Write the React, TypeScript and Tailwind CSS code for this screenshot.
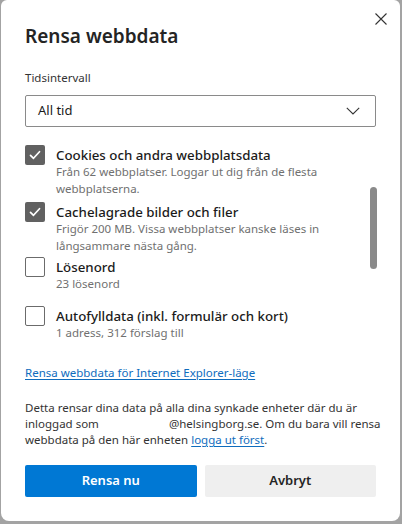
import React from "react";

const font = { fontFamily: '"Noto Sans", "Open Sans", sans-serif' };

const Check: React.FC<{ checked: boolean }> = ({ checked }) =>
  checked ? (
    <span className="flex h-[20px] w-[20px] shrink-0 items-center justify-center rounded-[2px] bg-[#616161]">
      <svg width="14" height="14" viewBox="0 0 14 14" fill="none">
        <path d="M2.5 7.3l3 3 6-6.6" stroke="#fff" strokeWidth="1.7" strokeLinecap="round" strokeLinejoin="round" />
      </svg>
    </span>
  ) : (
    <span className="h-[20px] w-[20px] shrink-0 rounded-[2px] border border-[#6b6b6b] bg-white" />
  );

interface Item {
  label: string;
  desc: React.ReactNode;
  checked: boolean;
  gap: string;
}

const items: Item[] = [
  {
    label: "Cookies och andra webbplatsdata",
    desc: (
      <>
        Från 62 webbplatser. Loggar ut dig från de flesta
        <br />
        webbplatserna.
      </>
    ),
    checked: true,
    gap: "mt-0",
  },
  {
    label: "Cachelagrade bilder och filer",
    desc: (
      <>
        Frigör 200 MB. Vissa webbplatser kanske läses in
        <br />
        långsammare nästa gång.
      </>
    ),
    checked: true,
    gap: "mt-[5px]",
  },
  { label: "Lösenord", desc: "23 lösenord", checked: false, gap: "mt-[3px]" },
  {
    label: "Autofylldata (inkl. formulär och kort)",
    desc: "1 adress, 312 förslag till",
    checked: false,
    gap: "mt-[14px]",
  },
];

export default function App() {
  return (
    <div className="h-[524px] w-[402px] bg-[#a3a3a3]" style={font}>
      <div className="relative ml-[1px] h-[521px] w-[399px] rounded-b-lg rounded-t-md bg-white px-[24px] pt-[24px] text-[#1b1b1b]">
        <button className="absolute right-[13px] top-[13px] flex h-[12px] w-[12px] items-center justify-center">
          <svg width="12" height="12" viewBox="0 0 12 12">
            <path d="M0.5 0.5l11 11M11.5 0.5l-11 11" stroke="#333" strokeWidth="1.1" />
          </svg>
        </button>

        {/* scrollbar of the list */}
        <div className="absolute right-[23px] top-[187px] h-[82px] w-[7px] rounded-full bg-[#8a8a8a]" />

        <h1 className="text-[19px] font-semibold leading-[24px] text-[#242424]">Rensa webbdata</h1>

        <div className="mt-[22px] text-[11.5px] leading-[16px] text-[#333]">Tidsintervall</div>

        <div className="mt-[9px] flex h-[32px] items-center justify-between rounded-[2px] border border-[#8a8a8a] pl-[12px] pr-[15px]">
          <span className="text-[13px] text-[#1b1b1b]">All tid</span>
          <svg width="14" height="8" viewBox="0 0 14 8" fill="none">
            <path d="M0.8 0.8l6.2 6.2 6.2-6.2" stroke="#333" strokeWidth="1.1" />
          </svg>
        </div>

        <div className="mt-[18px]">
          {items.map((it, i) => (
            <div key={i} className={`flex gap-[11px] ${it.gap}`}>
              <Check checked={it.checked} />
              <div>
                <div className="text-[13.3px] font-medium leading-[20px]">{it.label}</div>
                <div className="mt-[-2px] text-[11.5px] leading-[17px] text-[#707070]">{it.desc}</div>
              </div>
            </div>
          ))}
        </div>

        <a className="mt-[24px] block w-fit text-[11.5px] leading-[16px] text-[#0f6cbd] underline underline-offset-2">
          Rensa webbdata för Internet Explorer-läge
        </a>

        <p className="mt-[19px] whitespace-nowrap text-[11.5px] leading-[16px] text-[#333]">
          Detta rensar dina data på alla dina synkade enheter där du är
          <br />
          inloggad som<span className="inline-block w-[70px]" />
          @helsingborg.se. Om du bara vill rensa
          <br />
          webbdata på den här enheten{" "}
          <a className="text-[#0f6cbd] underline underline-offset-2">logga ut först</a>.
        </p>

        <div className="mt-[17px] flex gap-[8px]">
          <button className="h-[32px] flex-1 rounded-[2px] bg-[#0078d4] text-[13px] font-semibold text-white">
            Rensa nu
          </button>
          <button className="h-[32px] flex-1 rounded-[2px] bg-[#efefef] text-[13px] font-semibold text-[#242424]">
            Avbryt
          </button>
        </div>
      </div>
    </div>
  );
}
